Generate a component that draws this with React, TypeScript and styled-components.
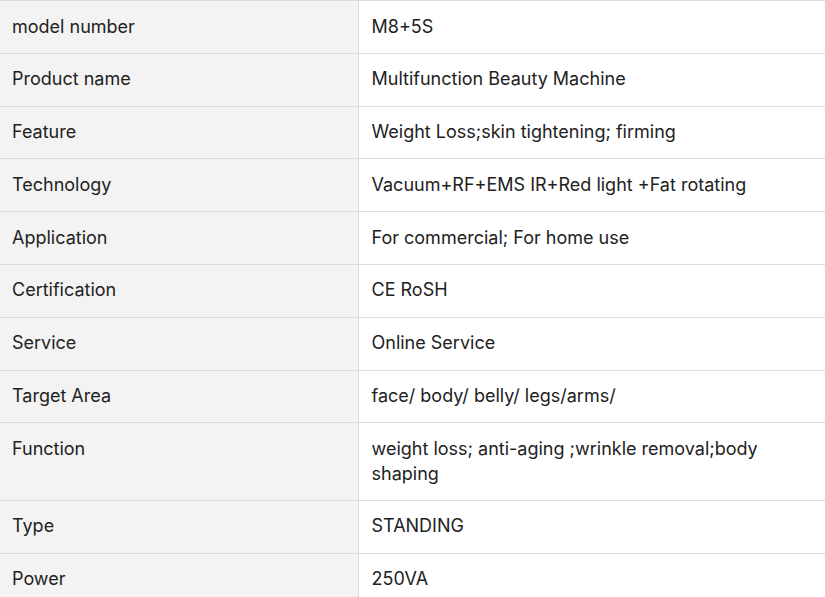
import React from "react";
import styled, { createGlobalStyle } from "styled-components";

const Global = createGlobalStyle`
  html, body { margin: 0; padding: 0; background: #fff; }
  body { font-family: Inter, "Noto Sans", sans-serif; }
`;

const Wrap = styled.div`
  width: 826px;
  overflow: hidden;
`;

const Table = styled.table`
  width: 100%;
  border-collapse: collapse;
  table-layout: fixed;
  font-family: Inter, "Noto Sans", sans-serif;
  font-size: 18px;
  line-height: 24.8px;
  color: #222;
`;

const Col = styled.col<{ $w?: string }>`
  width: ${(p) => p.$w ?? "auto"};
`;

const Cell = styled.td<{ $label?: boolean }>`
  border: 1px solid #dcdcdc;
  padding: 13.5px 12px 13.5px 13px;
  vertical-align: top;
  background: ${(p) => (p.$label ? "#f3f3f3" : "#fff")};
  ${(p) => (p.$label ? "border-left: none; padding-left: 12px;" : "")}
`;

const rows: [string, string][] = [
  ["model number", "M8+5S"],
  ["Product name", "Multifunction Beauty Machine"],
  ["Feature", "Weight Loss;skin tightening; firming"],
  ["Technology", "Vacuum+RF+EMS IR+Red light +Fat rotating"],
  ["Application", "For commercial; For home use"],
  ["Certification", "CE RoSH"],
  ["Service", "Online Service"],
  ["Target Area", "face/ body/ belly/ legs/arms/"],
  ["Function", "weight loss; anti-aging ;wrinkle removal;body shaping"],
  ["Type", "STANDING"],
  ["Power", "250VA"],
];

export default function App() {
  return (
    <Wrap>
      <Global />
      <Table>
        <colgroup>
          <Col $w="358px" />
          <Col />
        </colgroup>
        <tbody>
          {rows.map(([k, v]) => (
            <tr key={k}>
              <Cell $label>{k}</Cell>
              <Cell>{v}</Cell>
            </tr>
          ))}
        </tbody>
      </Table>
    </Wrap>
  );
}
